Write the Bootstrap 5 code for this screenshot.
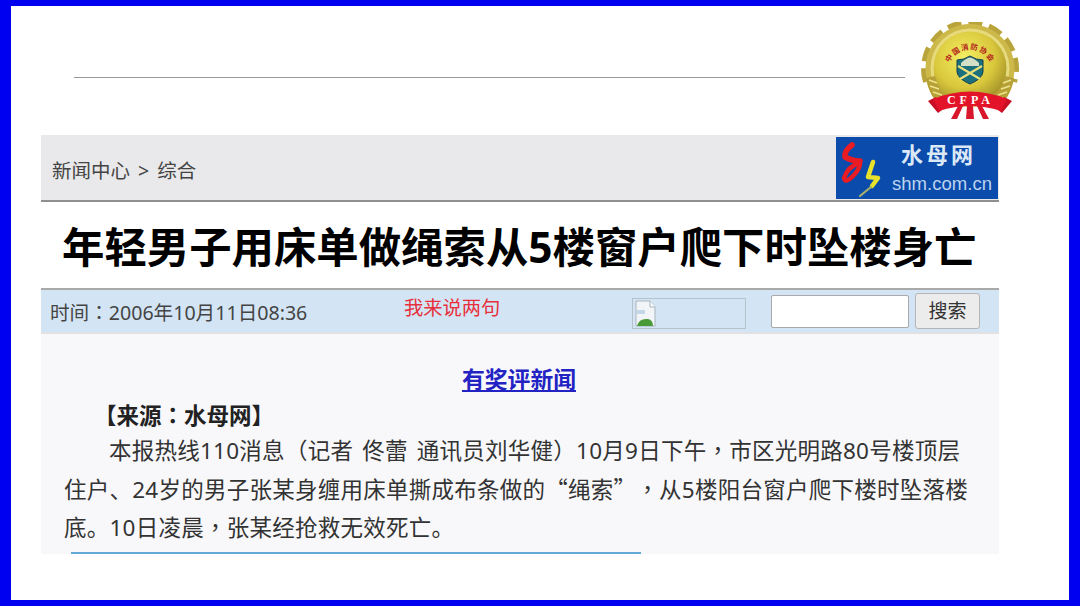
<!DOCTYPE html>
<html lang="zh-CN">
<head>
  <meta charset="UTF-8" />
  <meta name="viewport" content="width=device-width, initial-scale=1.0" />
  <title>年轻男子用床单做绳索从5楼窗户爬下时坠楼身亡</title>
  <link href="https://cdn.jsdelivr.net/npm/bootstrap@5.3.0/dist/css/bootstrap.min.css" rel="stylesheet" />
  <style>
    html, body {
      height: 606px;
      overflow: hidden;
      background: #fff;
    }
    body {
      font-family: "Noto Sans", "Noto Sans CJK SC", sans-serif;
      color: #333;
      text-spacing-trim: space-all;
    }
    .mid-punct {
      font-family: "Noto Sans CJK TC", sans-serif;
    }
    .slide-frame {
      height: 606px;
      border-style: solid;
      border-color: #0000f0;
      border-width: 6px 11px 6px 11px;
      background: #fff;
    }
    .slide-head {
      height: 129px;
      padding-left: 63px;
    }
    .head-rule {
      width: 831px;
      height: 1px;
      margin-top: 71px;
      background: #999;
    }
    .cfpa-logo {
      width: 100px;
      height: 97px;
      margin-left: 15px;
      margin-top: 16px;
    }
    .news-box {
      width: 958px;
      margin-left: 30px;
    }
    .crumb-bar {
      height: 67px;
      background: #e9e9eb;
      border-bottom: 2px solid #8f8f8f;
      padding-left: 11px;
      padding-right: 1px;
      font-size: 19.5px;
      word-spacing: 3px;
      color: #444;
    }
    .crumb-text {
      margin-top: 7px;
    }
    .shm-logo {
      width: 162px;
      height: 62px;
    }
    .news-title {
      height: 86px;
      margin: 0;
      font-family: "Noto Sans", "Noto Sans CJK SC", sans-serif;
      font-size: 42.4px;
      font-weight: 700;
      line-height: 89px;
      color: #000;
      background: #fff;
      padding-left: 21px;
      white-space: nowrap;
    }
    .meta-bar {
      height: 46px;
      background: #d3e5f5;
      border-top: 2px solid #a9a9a9;
      border-bottom: 2px solid #e2e2e4;
      padding-left: 9px;
      font-size: 19.6px;
      color: #444;
    }
    .meta-time {
      width: 354px;
      margin-top: 2px;
      white-space: nowrap;
    }
    .meta-comment {
      width: 228px;
      margin-top: -5px;
      color: #e8303c;
      font-size: 19.3px;
    }
    .broken-img {
      width: 114px;
      height: 31px;
      margin-top: 5px;
      border: 1px solid #b4c2cc;
    }
    .broken-img svg {
      display: block;
    }
    .search-input.form-control {
      width: 138px;
      height: 33px;
      margin-left: 25px;
      border: 1px solid #aaa;
      border-radius: 2px;
      padding: 0;
    }
    .search-btn.btn {
      width: 65px;
      height: 36px;
      margin-left: 6px;
      padding: 0;
      font-size: 19px;
      color: #333;
      background: #ececec;
      border: 1px solid #b5b5b5;
      border-radius: 3px;
      line-height: 1;
    }
    .news-body {
      height: 220px;
      background: #f8f8fa;
      position: relative;
      padding: 25px 0 0 23px;
      font-size: 22.5px;
      line-height: 37.5px;
      word-spacing: 3px;
      color: #333;
      white-space: nowrap;
    }
    .prize-head {
      padding-right: 25px;
      font-size: 16px;
      line-height: 42px;
    }
    .prize-link {
      font-size: 22.8px;
      font-weight: 700;
      color: #2323c4;
    }
    .source-line {
      font-size: 22.5px;
      font-weight: 700;
      padding-left: 30px;
      line-height: 32px;
      margin-top: -5px;
      color: #222;
    }
    .news-para {
      margin: 0;
      margin-top: -1px;
      letter-spacing: 0.25px;
    }
    .para-first {
      padding-left: 45px;
    }
    .foot-line {
      position: absolute;
      left: 30px;
      bottom: 0;
      width: 570px;
      height: 2px;
      background: #62a9d6;
    }
  </style>
</head>
<body class="m-0">
  <div class="slide-frame d-flex flex-column">
    <div class="slide-head d-flex align-items-start">
      <div class="head-rule"></div>
      <svg class="cfpa-logo" viewBox="0 0 100 97">
        <defs>
          <radialGradient id="goldFill" cx="42%" cy="35%" r="70%">
            <stop offset="0" stop-color="#f4ee62" />
            <stop offset="0.6" stop-color="#d9c73c" />
            <stop offset="1" stop-color="#9c8c25" />
          </radialGradient>
        </defs>
        <path d="M6 60 A46 46 0 1 1 94 60" fill="none" stroke="#b9a43c" stroke-width="6" stroke-dasharray="14 7" />
        <path d="M7 58 A44.5 44.5 0 1 1 93 58 L80 80 L20 80 Z" fill="#cdb94a" />
        <circle cx="50" cy="46" r="39.5" fill="#e6da7c" />
        <circle cx="50" cy="46" r="36.5" fill="url(#goldFill)" />
        <path d="M6 56 Q9 76 24 86 L33 78 Q19 70 15 54 Z" fill="#b6a136" />
        <path d="M94 56 Q91 76 76 86 L67 78 Q81 70 85 54 Z" fill="#b6a136" />
        <path d="M9 58 L17 61 M10 64 L19 67 M13 70 L22 73 M17 76 L26 78 M91 58 L83 61 M90 64 L81 67 M87 70 L78 73 M83 76 L74 78" stroke="#eee28a" stroke-width="1.8" />
        <path id="logoArc" d="M27.5 50 A22.5 22.5 0 0 1 72.5 50" fill="none" />
        <text font-family="'Noto Sans CJK SC', sans-serif" font-size="7.5" font-weight="700" fill="#b3261b" letter-spacing="1.1" text-anchor="middle">
          <textPath href="#logoArc" startOffset="50%">中国消防协会</textPath>
        </text>
        <path d="M37 38 Q44 38 50 34 Q56 38 63 38 L63 50 Q62 57 50 62 Q38 57 37 50 Z" fill="#1c6f7d" stroke="#123f4e" />
        <path d="M41 41 Q46 36 50 35.5 Q54 36 59 41 L59 44 L41 44 Z" fill="#d5dfc6" />
        <path d="M38 44 L60 57 M62 44 L40 57" stroke="#e9e07a" stroke-width="2.2" />
        <path d="M38 84 L31 97 L37 97 L43 84 Z M47 84 L46 97 L54 97 L53 84 Z M62 84 L69 97 L63 97 L57 84 Z" fill="#d8172c" />
        <path d="M8 79 L16 75 L22 88 L18 91 Z M92 79 L84 75 L78 88 L82 91 Z" fill="#c90f25" />
        <path d="M13 77 Q50 62 87 77 L81 89 Q50 79 19 89 Z" fill="#e3142a" />
        <text x="50.5" y="82" text-anchor="middle" font-family="'Liberation Serif', serif" font-size="12" font-weight="700" fill="#fff" letter-spacing="4">CFPA</text>
      </svg>
    </div>

    <div class="news-box">
      <div class="crumb-bar d-flex align-items-center justify-content-between">
        <span class="crumb-text">新闻中心 &gt; 综合</span>
        <svg class="shm-logo" viewBox="0 0 162 62">
          <rect width="162" height="62" fill="#0b4bac" />
          <g fill="none" stroke-linecap="round" stroke-linejoin="round">
            <path d="M16 8 Q8 14 9 20 Q16 24 24 24" stroke="#e81c22" stroke-width="5.5" />
            <path d="M24 26 Q12 29 8 41 Q9 47 17 39 Q24 32 24 26" stroke="#e81c22" stroke-width="4.5" />
            <path d="M37 25 L32 40 L42 41 L36 49" stroke="#e8e32a" stroke-width="4.5" />
            <path d="M35 50 Q30 54 24 59" stroke="#a9b06a" stroke-width="2.2" />
          </g>
          <text x="65" y="26" font-family="'Noto Sans CJK SC', sans-serif" font-size="22" font-weight="700" fill="#dbe8f6" letter-spacing="3">水母网</text>
          <text x="56" y="53" font-family="'Liberation Sans', sans-serif" font-size="19" fill="#bdd3ee" textLength="100" lengthAdjust="spacingAndGlyphs">shm.com.cn</text>
        </svg>
      </div>

      <h1 class="news-title">年轻男子用床单做绳索从5楼窗户爬下时坠楼身亡</h1>

      <div class="meta-bar d-flex align-items-center">
        <span class="meta-time">时间<span class="mid-punct" lang="zh-TW">：</span>2006年10月11日08:36</span>
        <span class="meta-comment">我来说两句</span>
        <div class="broken-img">
          <svg width="24" height="29" viewBox="0 0 24 29">
            <path d="M3 2 H17 L22 8 V27 H3 Z" fill="#f2f5f8" stroke="#aab4bc" />
            <path d="M17 2 V8 H22" fill="#fff" stroke="#aab4bc" />
            <path d="M4 11 H12 V15 H4 Z" fill="#c3d6ea" />
            <path d="M4 27 Q6 19 15 20 Q20 21 20 27 Z" fill="#4b9a3a" />
          </svg>
        </div>
        <input class="search-input form-control" type="text" aria-label="搜索" />
        <button class="search-btn btn" type="button">搜索</button>
      </div>

      <div class="news-body">
        <div class="prize-head text-center"><a class="prize-link" href="#">有奖评新闻</a></div>
        <div class="source-line">【来源<span class="mid-punct" lang="zh-TW">：</span>水母网】</div>
        <p class="news-para"><span class="para-first">本报热线110消息<span class="mid-punct" lang="zh-TW">（</span>记者 佟蕾 通讯员刘华健<span class="mid-punct" lang="zh-TW">）</span>10月9日下午<span class="mid-punct" lang="zh-TW">，</span>市区光明路80号楼顶层</span><br>住户、24岁的男子张某身缠用床单撕成布条做的<span class="mid-punct" lang="zh-TW">“</span>绳索<span class="mid-punct" lang="zh-TW">”，</span>从5楼阳台窗户爬下楼时坠落楼<br>底。10日凌晨<span class="mid-punct" lang="zh-TW">，</span>张某经抢救无效死亡。</p>
        <div class="foot-line"></div>
      </div>
    </div>
  </div>

  <script src="https://cdn.jsdelivr.net/npm/bootstrap@5.3.0/dist/js/bootstrap.bundle.min.js"></script>
</body>
</html>
